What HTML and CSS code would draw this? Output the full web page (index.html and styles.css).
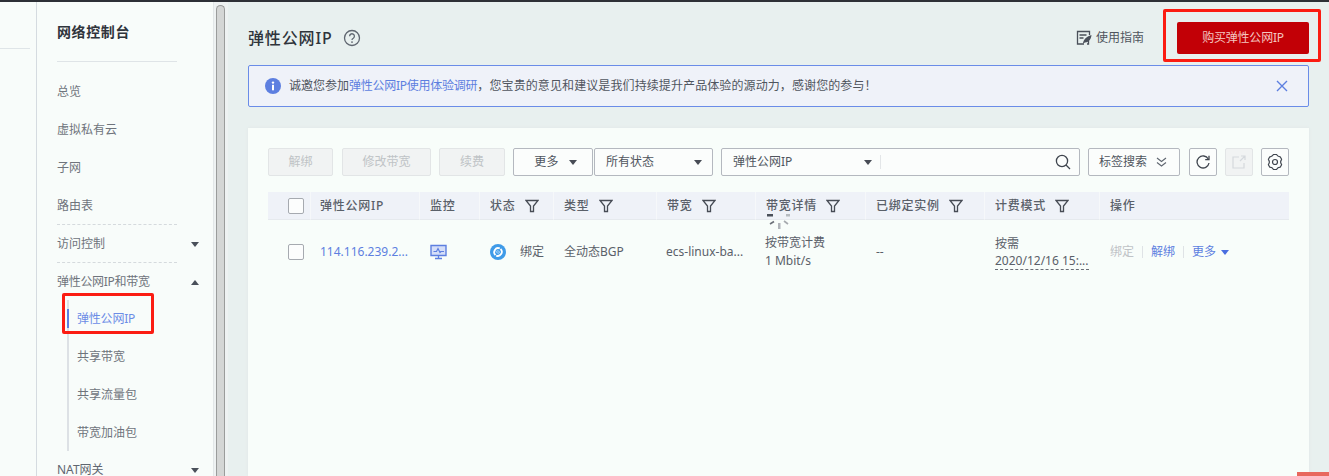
FILE: index.html
```html
<!DOCTYPE html>
<html lang="zh-CN">
<head>
<meta charset="utf-8">
<title>弹性公网IP</title>
<link rel="stylesheet" href="styles.css">
</head>
<body>
<div class="topbar"></div>
<div class="shell">
  <div class="stub"><div class="stub-line"></div></div>
  <aside class="sidebar">
    <h2 class="side-title">网络控制台</h2>
    <nav class="nav">
      <a class="nav-item">总览</a>
      <a class="nav-item">虚拟私有云</a>
      <a class="nav-item">子网</a>
      <a class="nav-item nav-sep">路由表</a>
      <a class="nav-item nav-sep">访问控制<span class="caret down"></span></a>
      <a class="nav-item tight">弹性公网IP和带宽<span class="caret up"></span></a>
      <div class="subnav">
        <a class="sub-item active">弹性公网IP</a>
        <a class="sub-item">共享带宽</a>
        <a class="sub-item">共享流量包</a>
        <a class="sub-item">带宽加油包</a>
      </div>
      <a class="nav-item nat">NAT网关<span class="caret down"></span></a>
    </nav>
    <div class="mark mark-nav"></div>
  </aside>
  <div class="scroll"><div class="thumb"></div></div>
  <main class="main">
    <header class="head">
      <h1 class="page-title">弹性公网IP</h1>
      <svg class="help" width="18" height="18" viewBox="0 0 18 18"><circle cx="9" cy="9" r="7.500" fill="none" stroke="#5f6670" stroke-width="1.300"/><path d="M6.600 7.200a2.400 2.400 0 1 1 3.700 2c-.9.500-1.300 1-1.300 1.900" fill="none" stroke="#5f6670" stroke-width="1.300"/><circle cx="9" cy="13.100" r=".9" fill="#5f6670"/></svg>
      <a class="guide">
        <svg width="16" height="16" viewBox="0 0 16 16"><path d="M8 14H1.500V1.500h12V5M12.500 11v3H11" fill="none" stroke="#4a505a" stroke-width="1.300"/><path d="M3.500 5h7M3.500 8h4" stroke="#4a505a" stroke-width="1.300"/><path d="M7 13.500c.3-3.500 3-7 8.500-8.500-.3 4.500-3 7.500-6.500 7.500z" fill="#4a505a"/></svg>
        使用指南
      </a>
      <button class="buy">购买弹性公网IP</button>
      <div class="mark mark-buy"></div>
    </header>
    <div class="notice">
      <svg class="info" width="16" height="16" viewBox="0 0 16 16"><circle cx="8" cy="8" r="8" fill="#5d7fe0"/><rect x="7" y="6.800" width="2" height="5.500" fill="#fff"/><circle cx="8" cy="4.600" r="1.200" fill="#fff"/></svg>
      <span class="notice-text">诚邀您参加<a class="link survey">弹性公网IP使用体验调研</a><span class="notice-rest">，您宝贵的意见和建议是我们持续提升产品体验的源动力，感谢您的参与！</span></span>
      <svg class="close" width="12" height="12" viewBox="0 0 12 12"><path d="M1 1l10 10M11 1L1 11" stroke="#5d7fe0" stroke-width="1.400"/></svg>
    </div>
    <section class="card">
      <div class="toolbar">
        <button class="btn off w65">解绑</button>
        <button class="btn off w89">修改带宽</button>
        <button class="btn off w66">续费</button>
        <button class="btn more">更多<span class="caret down dark"></span></button>
        <button class="btn status">所有状态<span class="caret down dark"></span></button>
        <div class="search">
          <span class="search-kind">弹性公网IP<span class="caret down dark"></span></span>
          <span class="search-input"></span>
          <svg width="16" height="16" viewBox="0 0 16 16"><circle cx="7" cy="7" r="5.600" fill="none" stroke="#3f454e" stroke-width="1.300"/><path d="M11 11l4 4" stroke="#3f454e" stroke-width="1.300"/></svg>
        </div>
        <button class="btn tags">标签搜索
          <svg width="11" height="10" viewBox="0 0 11 10"><path d="M1 1l4.500 3.500L10 1M1 5.500L5.500 9 10 5.500" fill="none" stroke="#5f6670" stroke-width="1.100"/></svg>
        </button>
        <button class="btn icon">
          <svg width="14" height="14" viewBox="0 0 14 14"><path d="M12.300 4A6 6 0 1 0 13 8" fill="none" stroke="#3f454e" stroke-width="1.300"/><path d="M13 .8V4.600H9.200" fill="none" stroke="#3f454e" stroke-width="1.300"/></svg>
        </button>
        <button class="btn icon off">
          <svg width="14" height="14" viewBox="0 0 14 14"><path d="M7 2H1v11h11V8M9 1h4v4M13 1L8 6" fill="none" stroke="#d5d9dd" stroke-width="1.200"/></svg>
        </button>
        <button class="btn icon">
          <svg width="16" height="16" viewBox="0 0 16 16"><path transform="rotate(90 8 8)" d="M5.800 1.600c1.300.9 3.100.9 4.400 0l.6-.2 2.400 1.400c.1 1.500 1 3 2.300 3.700v3c-1.300.7-2.200 2.200-2.300 3.700l-2.400 1.400-.6-.2c-1.300-.9-3.100-.9-4.400 0l-.6.2-2.400-1.400C2.700 11.700 1.800 10.200.5 9.500v-3c1.300-.7 2.200-2.200 2.300-3.700l2.400-1.400z" fill="none" stroke="#3f454e" stroke-width="1.200" stroke-linejoin="round"/><circle cx="8" cy="8" r="2.500" fill="none" stroke="#3f454e" stroke-width="1.200"/></svg>
        </button>
      </div>
      <div class="table">
        <div class="th th-check"><span class="check"></span></div>
        <div class="th th-ip">弹性公网IP</div>
        <div class="th">监控</div>
        <div class="th">状态<svg class="funnel" viewBox="0 0 14 14"><path d="M1 1.500h12L8.500 7v5.500h-3V7z"/></svg></div>
        <div class="th">类型<svg class="funnel" viewBox="0 0 14 14"><path d="M1 1.500h12L8.500 7v5.500h-3V7z"/></svg></div>
        <div class="th">带宽<svg class="funnel" viewBox="0 0 14 14"><path d="M1 1.500h12L8.500 7v5.500h-3V7z"/></svg></div>
        <div class="th">带宽详情<svg class="funnel" viewBox="0 0 14 14"><path d="M1 1.500h12L8.500 7v5.500h-3V7z"/></svg>
          <svg class="spinner" width="24" height="16" viewBox="0 0 24 16"><rect x="1" y="0" width="6" height="2.500" fill="#4a505a"/><rect x="20" y="0" width="4" height="2.500" fill="#b6bbc0"/><path d="M4 10l4-2.500" stroke="#6b7078" stroke-width="1.600"/><rect x="12" y="9" width="2.500" height="6" fill="#b0b4b9"/><path d="M18 7l4 3" stroke="#a5a9ae" stroke-width="1.600"/></svg>
        </div>
        <div class="th">已绑定实例<svg class="funnel" viewBox="0 0 14 14"><path d="M1 1.500h12L8.500 7v5.500h-3V7z"/></svg></div>
        <div class="th">计费模式<svg class="funnel" viewBox="0 0 14 14"><path d="M1 1.500h12L8.500 7v5.500h-3V7z"/></svg></div>
        <div class="th">操作</div>

        <div class="td th-check"><span class="check"></span></div>
        <div class="td"><a class="link">114.116.239.2...</a></div>
        <div class="td shift">
          <svg width="17" height="16" viewBox="0 0 17 16"><path d="M1 1.500h15v10H1z" fill="#d5def8" stroke="#5d7fe0" stroke-width="1.400"/><path d="M3.500 7.500h3l1.500-3 2 4 1-1h3" fill="none" stroke="#5d7fe0" stroke-width="1.200"/><path d="M5 14.500h7M8.500 11.500v3" stroke="#5d7fe0" stroke-width="1.300"/></svg>
        </div>
        <div class="td state shift">
          <svg width="16" height="16" viewBox="0 0 16 16"><circle cx="8" cy="8" r="8" fill="#3f9be8"/><path d="M5.500 11A4 4 0 0 1 9.800 4.400" fill="none" stroke="#fff" stroke-width="1.800"/><path d="M10.500 5A4 4 0 0 1 6.200 11.600" fill="none" stroke="#fff" stroke-width="1.800"/><path d="M7.400 6.400a2 2 0 0 0 .2 3M8.600 9.600a2 2 0 0 0-.2-3" fill="none" stroke="#bfe0fa" stroke-width="1"/></svg>
          <span>绑定</span>
        </div>
        <div class="td shift">全动态BGP</div>
        <div class="td">ecs-linux-ba...</div>
        <div class="td stack"><span>按带宽计费</span><span>1 Mbit/s</span></div>
        <div class="td shift">--</div>
        <div class="td stack shift"><span>按需</span><span class="dashed">2020/12/16 15:...</span></div>
        <div class="td ops shift"><span class="muted">绑定</span><i class="bar"></i><a class="link">解绑</a><i class="bar"></i><a class="link">更多</a><span class="caret down blue"></span></div>
      </div>
    </section>
  </main>
</div>
<div class="corner"></div>
</body>
</html>
```
FILE: styles.css
```css
* { box-sizing: border-box; }
html, body { height: 100%; }
body {
  margin: 0;
  height: 476px;
  overflow: hidden;
  display: flex;
  flex-direction: column;
  background: #e8f0ef;
  color: #4f555e;
  font: 12px/18px "Noto Sans", "Noto Sans CJK SC", sans-serif;
  position: relative;
}
.topbar { height: 2px; background: #2d3036; flex: none; }
.shell { flex: 1; display: flex; min-height: 0; }
.stub { width: 37px; background: #f8fcfa; border-right: 1px solid #d5dbe0; padding-top: 46px; flex: none; }
.stub-line { width: 30px; height: 1px; background: #dfe5e8; }

.sidebar { width: 176px; flex: none; background: #f8fcfa; padding: 0 36px 0 20px; position: relative; overflow: hidden; }
.side-title { margin: 0; height: 60px; border-bottom: 1px solid #dfe4e7; padding: 20px 0 0; font-size: 14px; line-height: 20px; letter-spacing: .6px; font-weight: 700; color: #2f343b; }
.nav { display: flex; flex-direction: column; padding-top: 11px; }
.nav-item { height: 38px; display: flex; align-items: center; justify-content: space-between; color: #6f747c; position: relative; flex: none; white-space: nowrap; }
.tight { letter-spacing: -.3px; }
.nav-sep::after { content: ""; position: absolute; left: 0; right: 0; bottom: 0; border-bottom: 1px dashed #d5dadd; }
.nat { color: #5f6670; }
.subnav { margin: -1px 0 0 10px; border-left: 2px solid #dde1e5; height: 151px; display: flex; flex-direction: column; flex: none; }
.sub-item { height: 38px; padding-left: 8px; margin-left: -2px; display: flex; align-items: center; flex: none; color: #6f747c; border-left: 2px solid transparent; }
.sub-item.active { color: #6c8ce6; position: relative; letter-spacing: -.2px; }
.sub-item.active::before { content: ""; position: absolute; left: -2px; top: 9px; height: 19px; width: 2px; background: #5d7fe0; }
.caret { display: inline-block; width: 0; height: 0; flex: none; border-left: 4.500px solid transparent; border-right: 4.500px solid transparent; margin-right: -21.500px; }
.caret.down { border-top: 5px solid #4a505a; }
.caret.up { border-bottom: 5px solid #4a505a; }
.caret.dark { margin-right: 0; border-top-color: #474c55; }
.caret.blue { margin: 0 0 0 5px; border-top-color: #4a6ee0; }

.mark { position: absolute; border: 3px solid #fb1c12; border-radius: 2px; pointer-events: none; }
.mark-nav { left: 25px; top: 291px; width: 92px; height: 41px; }

.scroll { width: 15px; flex: none; background: #eef2f2; border-left: 1px solid #e2e7e8; padding: 3px 3px 0 2px; }
.thumb { width: 9px; height: 100%; background: #d4d6d5; border: 1px solid #9a9c9b; border-bottom: 0; border-radius: 5px 5px 0 0; }

.main { flex: 1; min-width: 0; padding: 0 20px; display: flex; flex-direction: column; }
.head { height: 63px; flex: none; display: flex; align-items: center; position: relative; padding: 9px 0 1px; }
.page-title { margin: 0; font-size: 16px; line-height: 24px; font-weight: 500; letter-spacing: .85px; color: #2f343b; }
.help { margin-left: 10px; }
.guide { margin-left: auto; display: flex; align-items: center; gap: 4px; color: #4f555e; margin-right: 33px; }
.buy { width: 132px; height: 32px; border: 0; border-radius: 2px; background: #c20006; color: #f4c6c0; font: inherit; letter-spacing: -.2px; padding: 0; }
.mark-buy { right: -12px; top: 7px; width: 158px; height: 53px; }

.notice { height: 42px; flex: none; display: flex; align-items: center; padding: 0 20px 0 16px; background: #eff2f9; border: 1px solid #6a8ce8; border-radius: 2px; }
.info { margin-right: 8px; flex: none; }
.notice-text { flex: 1; white-space: nowrap; }
.link { color: #5d7fe0; }
.survey { letter-spacing: -.25px; }
.notice-rest { letter-spacing: .1px; }

.card { flex: 1; margin-top: 21px; background: #f8fdfa; padding: 20px 20px 0; min-height: 0; box-shadow: 0 0 3px #dfe5e6; }
.toolbar { display: flex; align-items: center; height: 28px; }
.btn { height: 28px; border: 1px solid #b4b8bf; border-radius: 2px; background: #fbfdfc; font: inherit; color: #4f555e; padding: 0; display: flex; align-items: center; justify-content: center; flex: none; }
.btn.off { background: #f1f3f3; border-color: #e2e5e6; color: #bfc3c6; }
.w65 { width: 65px; margin-right: 9px; }
.w89 { width: 89px; margin-right: 8px; }
.w66 { width: 66px; margin-right: 8px; }
.more { width: 80px; margin-right: 1px; gap: 10px; padding-left: 5px; letter-spacing: .2px; }
.status { width: 119px; margin-right: 8px; justify-content: space-between; padding: 0 10px 0 11px; }
.search { width: 359px; height: 28px; margin-right: 8px; border: 1px solid #b4b8bf; border-radius: 2px; display: flex; align-items: center; padding-right: 8px; background: #fbfdfc; }
.search-kind { width: 159px; padding: 0 8px 0 11px; display: flex; align-items: center; justify-content: space-between; border-right: 1px solid #e3e6e8; height: 14px; flex: none; line-height: 14px; }
.search-input { flex: 1; }
.tags { width: 92px; margin-right: 9px; gap: 9px; padding-right: 2px; }
.icon { width: 28px; margin-right: 8px; }
.icon:last-child { margin-right: 0; }

.table { margin-top: 16px; display: grid; grid-template-columns: 42px 109px 60px 74px 103px 99px 110px 119px 115px 190px; grid-template-rows: 28px 62px; }
.th { background: #eff2f8; border-bottom: 1px solid #e6eaee; border-left: 1px solid #f6f8fa; padding-left: 10px; display: flex; align-items: center; font-weight: 500; letter-spacing: .75px; color: #5a6069; position: relative; white-space: nowrap; }
.th.th-check { padding-left: 20px; border-left: 0; }
.th.th-ip { padding-left: 9px; }
.funnel { width: 14px; height: 14px; margin-left: 9px; flex: none; fill: none; stroke: #474c55; stroke-width: 1.300; }
.spinner { position: absolute; left: 10px; top: 22px; }
.td { padding: 2px 0 0 10px; display: flex; align-items: center; white-space: nowrap; color: #5a6069; }
.td.shift { padding-left: 11px; }
.td.th-check { padding-left: 20px; }
.check { width: 16px; height: 16px; border: 1px solid #a6aab0; border-radius: 2px; background: #fcfdfd; display: block; }
.state { gap: 14px; }
.stack { flex-direction: column; align-items: flex-start; justify-content: center; }
.dashed { border-bottom: 1px dashed #6a6f77; line-height: 16px; }
.muted { color: #bfc3c6; }
.bar { width: 1px; height: 12px; background: #dfe3e6; margin: 0 8px; }
.corner { position: absolute; right: 0; bottom: 0; width: 32px; height: 4px; background: #e8685e; }
```
